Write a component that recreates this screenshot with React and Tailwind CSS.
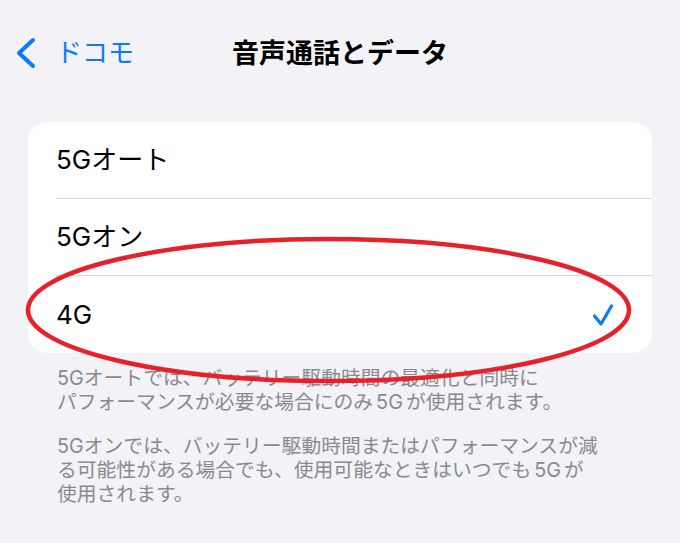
import React from "react";

const font = { fontFamily: '"Inter", "Noto Sans CJK JP", sans-serif' };

function Row({ label, checked, last }) {
  return (
    <div className="flex h-[77px] items-stretch pl-[28px]">
      <div
        className={
          "flex flex-1 items-center justify-between pr-[38px] " +
          (last ? "" : "border-b border-[#d9d9de]")
        }
      >
        <span className="text-[26px] text-black leading-none">{label}</span>
        {checked && (
          <svg width="22" height="24" viewBox="0 0 22 24" fill="none">
            <polyline
              points="2.5,13 9,21 19.5,3"
              stroke="#0a7aff"
              strokeWidth="3.2"
              strokeLinecap="round"
              strokeLinejoin="round"
            />
          </svg>
        )}
      </div>
    </div>
  );
}

export default function App() {
  return (
    <div
      className="relative w-[680px] h-[543px] overflow-hidden bg-[#f2f2f7]"
      style={font}
    >
      <div className="grid h-[52px] mt-[27px] grid-cols-[1fr_auto_1fr] items-center">
        <div className="flex items-center pl-[16px]">
          <svg width="20" height="32" viewBox="0 0 20 32" fill="none">
            <polyline
              points="17,3 3,16 17,29"
              stroke="#0a7aff"
              strokeWidth="4"
              strokeLinecap="round"
              strokeLinejoin="round"
            />
          </svg>
          <span className="ml-[20px] text-[26px] text-[#0a7aff] leading-none">
            ドコモ
          </span>
        </div>
        <div className="text-[27px] font-semibold text-black leading-none">
          音声通話とデータ
        </div>
        <div />
      </div>

      <div className="mx-[28px] mt-[43px] overflow-hidden rounded-[20px] bg-white">
        <Row label="5Gオート" />
        <Row label="5Gオン" />
        <Row label="4G" checked last />
      </div>

      <div className="px-[57px] pt-[13px] text-[19.8px] leading-[24px] text-[#8a8a8e]">
        <p>
          5Gオートでは、バッテリー駆動時間の最適化と同時に
          <br />
          パフォーマンスが必要な場合にのみ<span className="mx-[3px]">5G</span>が使用されます。
        </p>
        <p className="mt-[20px]">
          5Gオンでは、バッテリー駆動時間またはパフォーマンスが減
          <br />
          る可能性がある場合でも、使用可能なときはいつでも<span className="mx-[3px]">5G</span>が
          <br />
          使用されます。
        </p>
      </div>

      <svg
        className="pointer-events-none absolute inset-0"
        width="680"
        height="543"
        viewBox="0 0 680 543"
        fill="none"
      >
        <ellipse
          cx="328.5"
          cy="310"
          rx="300.5"
          ry="71"
          stroke="#e8202a"
          strokeWidth="4.5"
        />
      </svg>
    </div>
  );
}
